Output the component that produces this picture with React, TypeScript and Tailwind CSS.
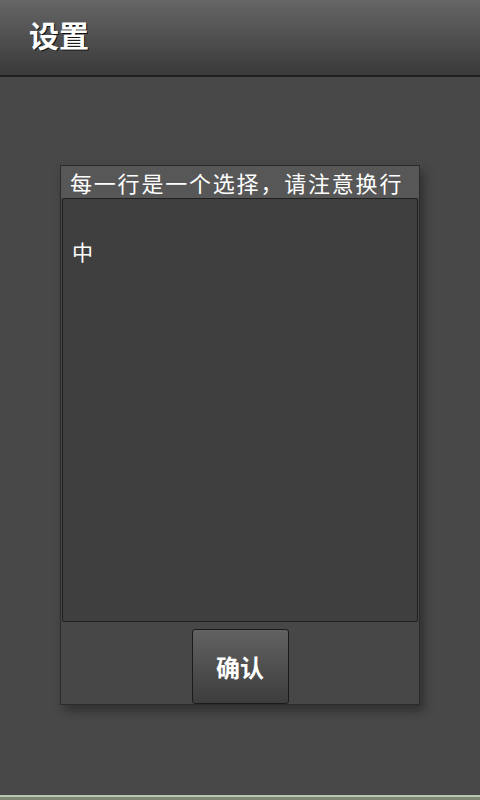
import React from 'react';

const cjk = { fontFamily: '"Noto Sans CJK SC", "Noto Sans", sans-serif' };

const App = () => {
  return (
    <div className="w-[480px] h-[800px] flex flex-col bg-[#484848]" style={cjk}>
      {/* Title bar */}
      <div className="h-[77px] shrink-0 bg-gradient-to-b from-[#666666] to-[#3a3a3a] border-b-2 border-[#1f1f1f] flex items-center pl-[29px]">
        <span className="text-white text-[30px] font-bold leading-none -mt-[8px] [text-shadow:1px_1px_0_#111]">设置</span>
      </div>

      <div className="flex-1 flex flex-col pt-[88px]">
        <div className="mx-auto w-[360px] h-[540px] flex flex-col border border-[#2b2b2b] bg-[#474747] shadow-[4px_6px_10px_rgba(0,0,0,0.35)]">
          <div className="h-[32px] shrink-0 bg-[#575757] flex items-center pl-[9px] text-white text-[22px] tracking-[1.8px] leading-none whitespace-nowrap">
            每一行是一个选择，请注意换行
          </div>
          <div className="mx-[1px] h-[424px] shrink-0 bg-[#3f3f3f] border border-[#202020] rounded-[2px] pl-[9px] pt-[42px]">
            <span className="text-white text-[21px] leading-none">中</span>
          </div>
          <div className="flex-1 flex justify-center pt-[7px]">
            <button className="w-[97px] h-[75px] rounded-[3px] border border-[#1b1b1b] bg-gradient-to-b from-[#626262] to-[#3d3d3d] text-white text-[24px] font-bold">
              确认
            </button>
          </div>
        </div>
      </div>

      <div className="h-[5px] shrink-0 flex flex-col">
        <div className="h-[2px] bg-[#b9c7b1]" />
        <div className="flex-1 bg-[#7c8874]" />
      </div>
    </div>
  );
};

export default App;
